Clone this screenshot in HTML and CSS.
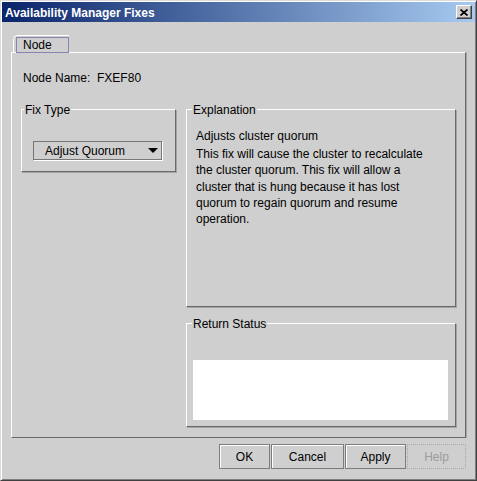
FILE: index.html
```html
<!DOCTYPE html>
<html>

<head>
    <title>Availability Manager Fixes</title>
    <link rel="stylesheet" href="styles.css">
</head>

<body>
    <div class="window">
        <div class="titlebar">
            <span class="title">Availability Manager Fixes</span>
            <button class="close">
                <svg width="8" height="7" viewBox="0 0 8 7">
                    <path d="M0.5 0.5 L7.5 6.5 M7.5 0.5 L0.5 6.5" stroke="#000" stroke-width="1.7" fill="none" />
                </svg>
            </button>
        </div>

        <div class="client">
            <div class="tabs">
                <div class="tab"><span class="tab-label">Node</span></div>
            </div>

            <div class="tab-panel">
                <div class="node-name">Node Name:&nbsp; FXEF80</div>

                <div class="groups">
                    <div class="group fix-type">
                        <span class="group-title">Fix Type</span>
                        <div class="combo">
                            <span>Adjust Quorum</span>
                            <span class="arrow"></span>
                        </div>
                    </div>

                    <div class="column">
                        <div class="group explanation">
                            <span class="group-title">Explanation</span>
                            <div class="expl-head">Adjusts cluster quorum</div>
                            <div class="expl-text">
                                This fix will cause the cluster to recalculate<br>
                                the cluster quorum. This fix will allow a<br>
                                cluster that is hung because it has lost<br>
                                quorum to regain quorum and resume<br>
                                operation.
                            </div>
                        </div>

                        <div class="group return-status">
                            <span class="group-title">Return Status</span>
                            <div class="status-box"></div>
                        </div>
                    </div>
                </div>
            </div>

            <div class="buttons">
                <button class="btn btn-ok">OK</button>
                <button class="btn btn-cancel">Cancel</button>
                <button class="btn btn-apply">Apply</button>
                <button class="btn btn-help" disabled>Help</button>
            </div>
        </div>
    </div>
</body>

</html>
```

FILE: styles.css
```css
body {
    margin: 0;
    font-family: "Liberation Sans", Arial, sans-serif;
    font-size: 12px;
    color: #000;
}

.window {
    width: 477px;
    height: 481px;
    box-sizing: border-box;
    background-color: #cfcfcf;
    border: 1px solid;
    border-color: #dcdcdc #404040 #404040 #dcdcdc;
    box-shadow: inset 1px 1px #ffffff, inset -1px -1px #808080;
}

/* title bar */
.titlebar {
    margin: 1px 1px 0 1px;
    height: 20px;
    padding: 0 3px;
    display: flex;
    align-items: center;
    background: linear-gradient(to right, #0a246a, #a6caf0);
}

.title {
    flex: 1;
    color: #fff;
    font-weight: bold;
    font-size: 12px;
    padding-top: 1px;
}

.close {
    width: 16px;
    height: 14px;
    padding: 0;
    display: flex;
    align-items: center;
    justify-content: center;
    background-color: #cfcfcf;
    border: 1px solid;
    border-color: #fff #404040 #404040 #fff;
    box-shadow: inset -1px -1px #808080;
}

.client {
    padding: 13px 9px 0 10px;
}

/* tab */
.tabs {
    display: flex;
    padding-left: 2px;
}

.tab {
    position: relative;
    z-index: 1;
    width: 56px;
    height: 18px;
    box-sizing: border-box;
    padding: 1px 0 0 2px;
    margin-bottom: -1px;
    border-left: 1px solid #fff;
    border-top: 1px solid #fff;
    border-top-left-radius: 5px;
}

.tab-label {
    display: block;
    height: 100%;
    box-sizing: border-box;
    border: 1px solid #8585b0;
    padding-left: 6px;
    line-height: 14px;
    background-color: #cfcfcf;
}

.tab-panel {
    width: 455px;
    height: 386px;
    box-sizing: border-box;
    border: 1px solid;
    border-color: #fff #6a6a6a #6a6a6a #fff;
    box-shadow: 1px 0 #a4a4a4;
    padding: 18px 9px 0 9px;
}

.node-name {
    line-height: 14px;
    margin-left: 2px;
}

/* group boxes */
.groups {
    display: flex;
    align-items: flex-start;
    gap: 10px;
    margin-top: 24px;
}

.column {
    display: flex;
    flex-direction: column;
    gap: 16px;
}

.group {
    position: relative;
    box-sizing: border-box;
    border: 1px solid;
    border-color: #fff #6a6a6a #6a6a6a #fff;
    box-shadow: 1px 1px #a4a4a4;
}

.group-title {
    position: absolute;
    top: -7px;
    left: 5px;
    padding: 0 1px;
    line-height: 14px;
    background-color: #cfcfcf;
}

.fix-type {
    width: 155px;
    height: 63px;
    padding: 31px 0 0 11px;
}

.fix-type .group-title {
    left: 2px;
}

.combo {
    width: 129px;
    height: 19px;
    box-sizing: border-box;
    border: 1px solid #777;
    box-shadow: 1px 1px #fff;
    display: flex;
    align-items: center;
    padding-left: 11px;
}

.arrow {
    margin-left: auto;
    margin-right: 3px;
    border-left: 5px solid transparent;
    border-right: 5px solid transparent;
    border-top: 5px solid #000;
}

.explanation {
    width: 270px;
    height: 198px;
    padding: 18px 0 0 9px;
}

.expl-head {
    line-height: 16px;
    margin-bottom: 2px;
}

.expl-text {
    line-height: 16.3px;
}

.return-status {
    width: 270px;
    height: 104px;
    padding: 36px 0 0 6px;
}

.status-box {
    width: 255px;
    height: 60px;
    background-color: #fff;
}

/* dialog buttons */
.buttons {
    width: 455px;
    display: flex;
    justify-content: flex-end;
    gap: 1px;
    margin-top: 6px;
}

.btn {
    height: 25px;
    padding: 0;
    font-family: "Liberation Sans", Arial, sans-serif;
    font-size: 12px;
    color: #000;
    background-color: #cfcfcf;
    border: 1px solid #7c7c7c;
    box-shadow: inset 1px 1px #fff;
}

.btn-ok {
    width: 51px;
}

.btn-cancel {
    width: 73px;
}

.btn-apply {
    width: 61px;
}

.btn-help {
    width: 59px;
    color: #9c9c9c;
    border: 1px dotted #a8a8a8;
    box-shadow: none;
}
```
